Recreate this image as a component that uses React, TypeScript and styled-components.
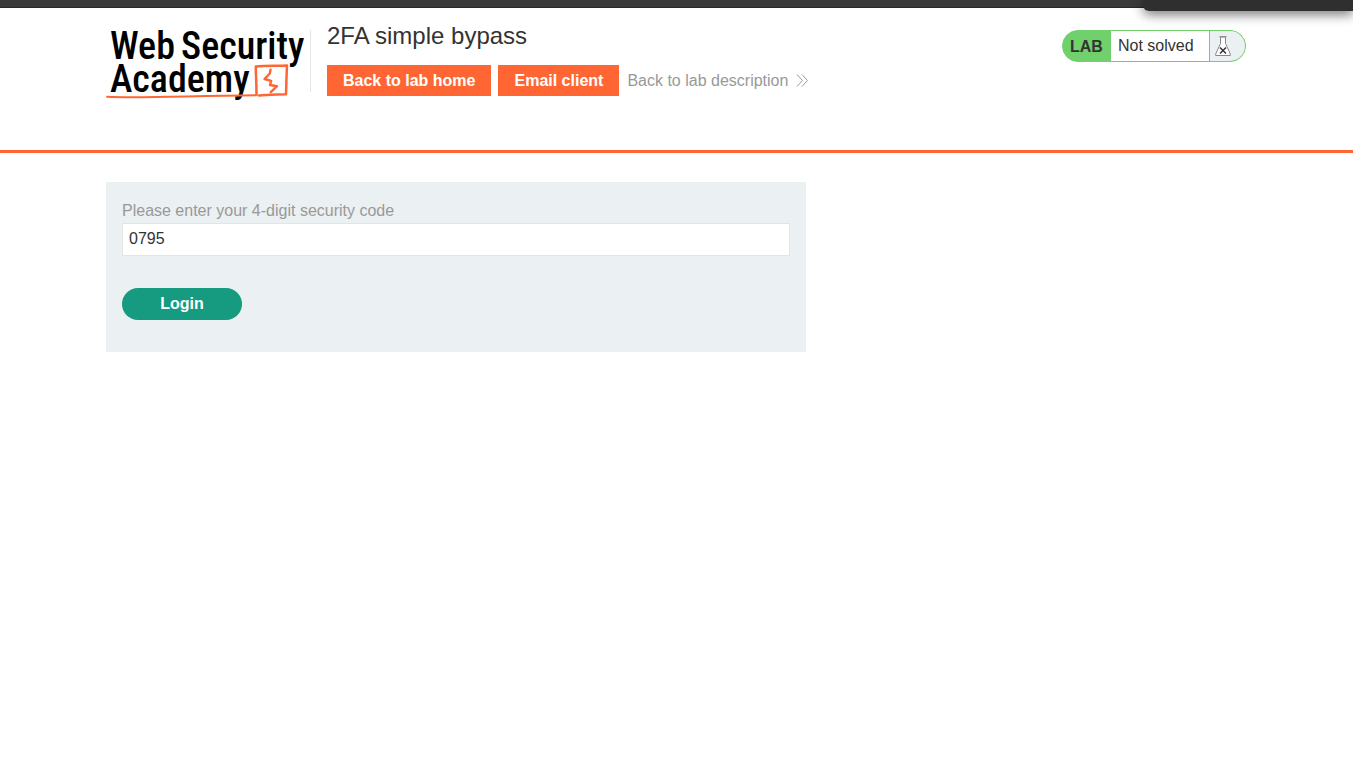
import React, { useState } from "react";
import styled, { createGlobalStyle } from "styled-components";

const GlobalStyle = createGlobalStyle`
  *, *::before, *::after { box-sizing: border-box; }
  body {
    margin: 0;
    background: #fff;
    color: #333332;
    font-family: "Liberation Sans", Arial, Helvetica, sans-serif;
    font-size: 16px;
    line-height: 24px;
    overflow-x: hidden;
  }
`;

const WindowBar = styled.div`
  position: relative;
  height: 8px;
  background: #3a3a3a;
  border-bottom: 1px solid #282828;
`;

const WindowPopup = styled.div`
  position: absolute;
  top: 0;
  right: 0;
  width: 210px;
  height: 11px;
  background: #2f2f2f;
  border-bottom-left-radius: 6px;
  box-shadow: 0 3px 12px rgba(0, 0, 0, 0.6);
`;

const Header = styled.header`
  height: 145px;
  padding-top: 12px;
  border-bottom: 3px solid #ff6633;
`;

const Container = styled.div`
  width: 100%;
  max-width: 1141px;
  margin: 0 auto;
  padding-right: 1px;
`;

const HeaderRow = styled(Container)`
  display: flex;
  align-items: flex-start;
`;

const LogoLink = styled.a`
  display: block;
  flex: none;
  width: 204px;
  height: 72px;
  margin-top: 10px;
  svg { display: block; overflow: visible; }
  text { font-family: "Roboto Condensed", Roboto, sans-serif; font-size: 38px; font-weight: 500; }
`;

const TitleBlock = styled.div`
  flex: 1;
  margin-top: 10px;
  border-left: 1px solid #e4e4e4;
  height: 62px;
  padding-left: 16px;
`;

const Title = styled.h2`
  margin: -9px 0 14px;
  font-size: 24px;
  line-height: 30px;
  font-weight: 400;
`;

const Actions = styled.nav`
  display: flex;
  align-items: center;
  gap: 7px;
`;

const OrangeLink = styled.a`
  padding: 0 16px;
  background: #ff6633;
  color: #fff;
  font-weight: 700;
  line-height: 31px;
  text-decoration: none;
  white-space: nowrap;
`;

const BackLink = styled.a`
  display: flex;
  align-items: center;
  gap: 8px;
  margin-left: 1px;
  color: #999;
  text-decoration: none;
  white-space: nowrap;
`;

const Status = styled.div`
  display: flex;
  flex: none;
  width: 184px;
  height: 32px;
  margin-top: 10px;
  border: 1px solid #6fd06c;
  border-radius: 16px;
  overflow: hidden;
  background: #6fd06c;
  line-height: 30px;
`;

const StatusTag = styled.span`
  width: 48px;
  padding-left: 7px;
  font-weight: 700;
  line-height: 32px;
`;

const StatusText = styled.p`
  flex: 1;
  margin: 0;
  padding-left: 7px;
  background: #fff;
`;

const StatusIcon = styled.span`
  width: 36px;
  padding: 5px 0 0 5px;
  border-left: 1px solid #6fd06c;
  background: #ebf0f2;
  svg { display: block; }
`;

const Main = styled(Container).attrs({ as: "main" })`
  padding-top: 29px;
`;

const LoginForm = styled.form`
  max-width: 700px;
  padding: 16px 16px 32px;
  background: #ebf0f2;
`;

const Label = styled.label`
  display: block;
  line-height: 25px;
  color: #999;
`;

const CodeInput = styled.input`
  display: block;
  width: 100%;
  height: 33px;
  margin-bottom: 32px;
  padding: 0 6px 2px;
  border: 1px solid #e4e4e4;
  border-radius: 0;
  background: #fff;
  color: #333332;
  font: inherit;
  outline: none;
`;

const LoginButton = styled.button`
  display: block;
  width: 120px;
  height: 32px;
  padding: 0;
  border: 0;
  border-radius: 16px;
  background: #169b80;
  color: #fff;
  font: inherit;
  font-weight: 700;
`;

const Logo = () => (
  <svg width="204" height="72" viewBox="0 0 204 72" role="img" aria-label="Web Security Academy">
    <text x="4" y="29">Web</text>
    <text x="75" y="29">Security</text>
    <text x="4" y="62">Academy</text>
    <g fill="none" stroke="#ff6633" strokeLinecap="round" strokeLinejoin="round">
      <path d="M1 66.8 C34 68.6 82 65.8 149.5 65.2" strokeWidth="1.9" />
      <path d="M150.5 65 C150.5 52 149.8 45 149.8 36.5 C161 35.7 172 36 181 35.6 C180.5 46 180.3 55 180 64.2 C170 64.6 161 64.2 153 65.5" strokeWidth="2.5" />
      <path d="M164.5 39.8 L163.8 43.5 L158.5 49 L165.2 50.8 L164 55 L171 56.2 L164.8 62.2" strokeWidth="2.4" />
    </g>
  </svg>
);

const DoubleChevron = () => (
  <svg width="13" height="14" viewBox="0 0 13 14" fill="none" stroke="#999" strokeWidth="1" aria-hidden="true">
    <path d="M1 0.5 L6.5 6.5 L1 12.5 M6 0.5 L11.5 6.5 L6 12.5" />
  </svg>
);

const Flask = () => (
  <svg width="17" height="21" viewBox="0 0 17 21" fill="none" aria-hidden="true">
    <path d="M5.5 1 V7.5 L0.7 18 V19.5 H15.3 V18 L10.5 7.5 V1 Z" fill="#fff" stroke="#888" />
    <path d="M4.5 0.7 H11.5" stroke="#888" />
    <path d="M5 11.5 L11 17.5 M11 11.5 L5 17.5" stroke="#333332" strokeWidth="1.5" />
  </svg>
);

export default function App() {
  const [code, setCode] = useState("0795");
  return (
    <>
      <GlobalStyle />
      <WindowBar>
        <WindowPopup />
      </WindowBar>
      <Header>
        <HeaderRow>
          <LogoLink href="#academy"><Logo /></LogoLink>
          <TitleBlock>
            <Title>2FA simple bypass</Title>
            <Actions>
              <OrangeLink href="#home">Back to lab home</OrangeLink>
              <OrangeLink href="#email">Email client</OrangeLink>
              <BackLink href="#description">
                Back to lab description
                <DoubleChevron />
              </BackLink>
            </Actions>
          </TitleBlock>
          <Status>
            <StatusTag>LAB</StatusTag>
            <StatusText>Not solved</StatusText>
            <StatusIcon><Flask /></StatusIcon>
          </Status>
        </HeaderRow>
      </Header>
      <Main>
        <LoginForm onSubmit={(event) => event.preventDefault()}>
          <Label htmlFor="mfa-code">Please enter your 4-digit security code</Label>
          <CodeInput
            id="mfa-code"
            name="mfa-code"
            value={code}
            onChange={(event) => setCode(event.target.value)}
          />
          <LoginButton type="submit">Login</LoginButton>
        </LoginForm>
      </Main>
    </>
  );
}
